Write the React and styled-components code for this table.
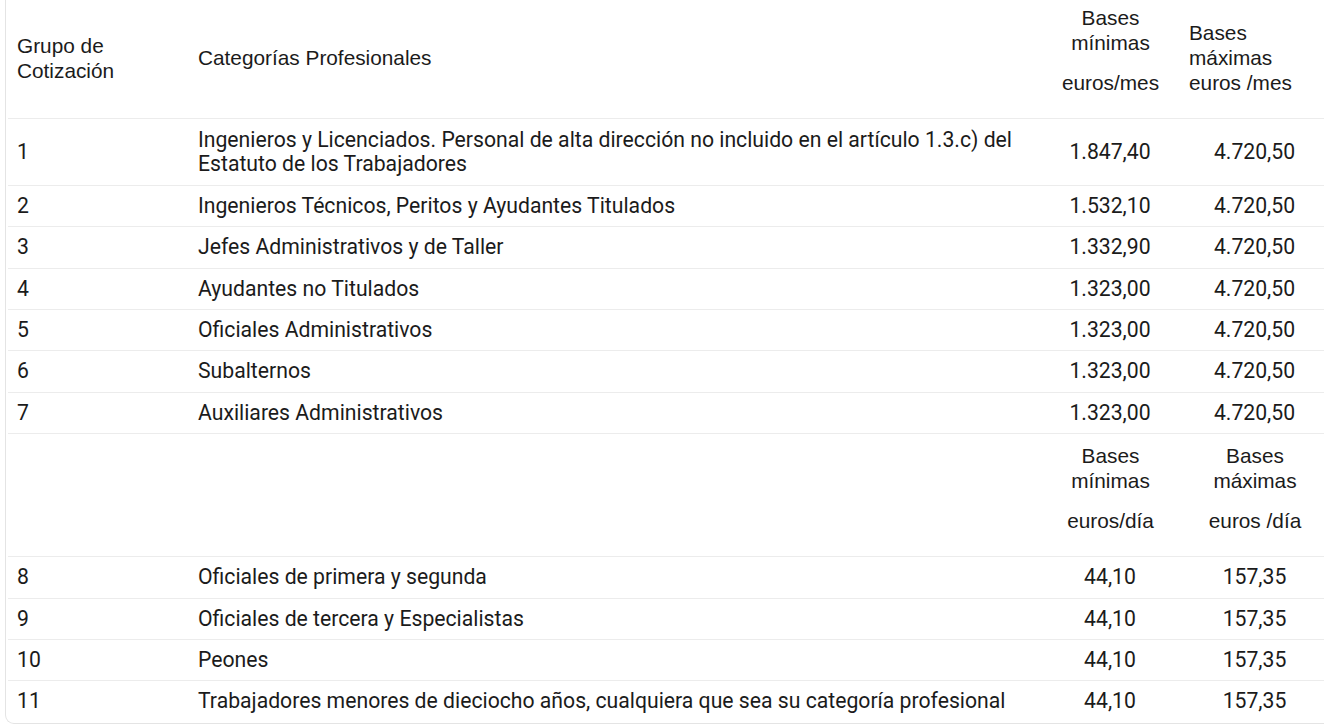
import React from "react";
import styled, { createGlobalStyle } from "styled-components";

const GlobalStyle = createGlobalStyle`
  html, body {
    margin: 0;
    padding: 0;
    background: #fff;
    overflow: hidden;
  }
`;

const mensual = [
  ["1", "Ingenieros y Licenciados. Personal de alta dirección no incluido en el artículo 1.3.c) del Estatuto de los Trabajadores", "1.847,40", "4.720,50"],
  ["2", "Ingenieros Técnicos, Peritos y Ayudantes Titulados", "1.532,10", "4.720,50"],
  ["3", "Jefes Administrativos y de Taller", "1.332,90", "4.720,50"],
  ["4", "Ayudantes no Titulados", "1.323,00", "4.720,50"],
  ["5", "Oficiales Administrativos", "1.323,00", "4.720,50"],
  ["6", "Subalternos", "1.323,00", "4.720,50"],
  ["7", "Auxiliares Administrativos", "1.323,00", "4.720,50"],
];

const diario = [
  ["8", "Oficiales de primera y segunda", "44,10", "157,35"],
  ["9", "Oficiales de tercera y Especialistas", "44,10", "157,35"],
  ["10", "Peones", "44,10", "157,35"],
  ["11", "Trabajadores menores de dieciocho años, cualquiera que sea su categoría profesional", "44,10", "157,35"],
];

export default function App() {
  return (
    <>
      <GlobalStyle />
      <Card>
        <Table>
          <colgroup>
            <col style={{ width: 181 }} />
            <col style={{ width: 852 }} />
            <col style={{ width: 139 }} />
            <col style={{ width: 150 }} />
          </colgroup>
          <tbody>
            <Row>
              <Head>Grupo de<br />Cotización</Head>
              <Head>Categorías Profesionales</Head>
              <Head $stacked $center>
                <HeadP>Bases<br />mínimas</HeadP>
                <HeadP $last>euros/mes</HeadP>
              </Head>
              <Head>Bases<br />máximas<br />euros /mes</Head>
            </Row>
            {mensual.map((r) => (
              <Row key={r[0]}>
                <Cell>{r[0]}</Cell>
                <Cell $wide={r[0] === "1"}>{r[1]}</Cell>
                <Cell $center>{r[2]}</Cell>
                <Cell $center>{r[3]}</Cell>
              </Row>
            ))}
            <Row>
              <Head $stacked $second />
              <Head $stacked $second />
              <Head $stacked $center $second>
                <HeadP>Bases<br />mínimas</HeadP>
                <HeadP $last>euros/día</HeadP>
              </Head>
              <Head $stacked $center $second>
                <HeadP>Bases<br />máximas</HeadP>
                <HeadP $last>euros /día</HeadP>
              </Head>
            </Row>
            {diario.map((r) => (
              <Row key={r[0]}>
                <Cell>{r[0]}</Cell>
                <Cell>{r[1]}</Cell>
                <Cell $center>{r[2]}</Cell>
                <Cell $center>{r[3]}</Cell>
              </Row>
            ))}
          </tbody>
        </Table>
      </Card>
    </>
  );
}

const Card = styled.div`
  width: 1326px;
  margin-left: 5px;
  padding: 0 2px 1px;
  border: 1px solid #e4e4e4;
  border-top: 0;
  border-radius: 0 0 9px 9px;
  background: #fff;
`;

const Table = styled.table`
  width: 1322px;
  table-layout: fixed;
  border-collapse: collapse;
  color: #1b1b1b;
`;

const Row = styled.tr`
  border-bottom: 1px solid #ececec;

  &:last-child {
    border-bottom: 0;
  }
`;

const Cell = styled.td`
  padding: ${(p) => (p.$wide ? "8.5px 10px 8.5px 9px" : "8px 10px 8px 9px")};
  font-family: Roboto, "Liberation Sans", sans-serif;
  font-size: 21.2px;
  line-height: 24.4px;
  vertical-align: middle;
  text-align: ${(p) => (p.$center ? "center" : "left")};
`;

const Head = styled.td`
  padding: ${(p) =>
    p.$stacked ? (p.$second ? "9px 10px 0" : "5px 10px 0") : "0 10px 3px 9px"};
  font-family: "Liberation Sans", Arial, sans-serif;
  font-size: 20.8px;
  line-height: 25px;
  vertical-align: ${(p) => (p.$stacked ? "top" : "middle")};
  text-align: ${(p) => (p.$center ? "center" : "left")};
`;

const HeadP = styled.p`
  margin: 0 0 ${(p) => (p.$last ? "23px" : "15px")};
`;
